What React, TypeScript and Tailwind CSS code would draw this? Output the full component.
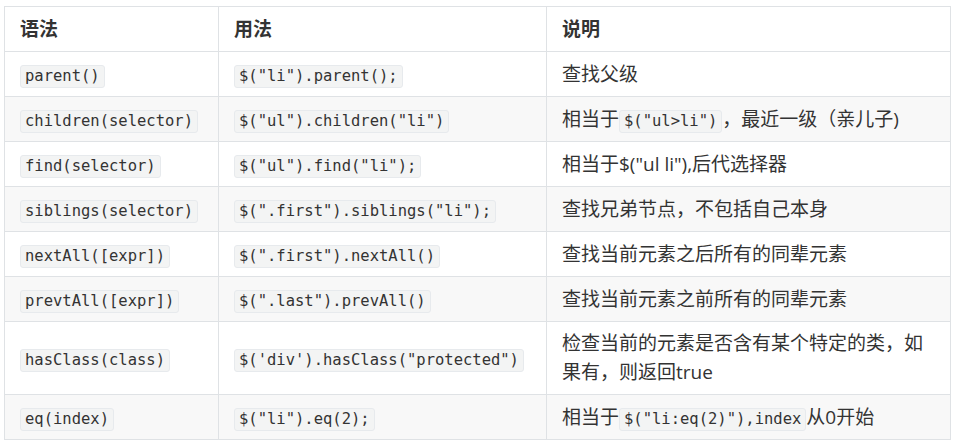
import React from "react";

const C = ({ children }: { children: React.ReactNode }) => (
  <code className="inline-block rounded-[3px] border border-[#e7eaed] bg-[#f3f4f4] px-[4px] py-[1px] align-baseline font-['DejaVu_Sans_Mono','Liberation_Mono',monospace] text-[15.5px] leading-[19px] text-[#333]">
    {children}
  </code>
);

const rows: [string, string, React.ReactNode][] = [
  ["parent()", '$("li").parent();', "查找父级"],
  [
    "children(selector)",
    '$("ul").children("li")',
    <>
      相当于<C>{'$("ul>li")'}</C>，最近一级（亲儿子)
    </>,
  ],
  ["find(selector)", '$("ul").find("li");', '相当于$("ul li"),后代选择器'],
  ["siblings(selector)", '$(".first").siblings("li");', "查找兄弟节点，不包括自己本身"],
  ["nextAll([expr])", '$(".first").nextAll()', "查找当前元素之后所有的同辈元素"],
  ["prevtAll([expr])", '$(".last").prevAll()', "查找当前元素之前所有的同辈元素"],
  [
    "hasClass(class)",
    "$('div').hasClass(\"protected\")",
    "检查当前的元素是否含有某个特定的类，如果有，则返回true",
  ],
  [
    "eq(index)",
    '$("li").eq(2);',
    <>
      相当于<C>{'$("li:eq(2)"),index'}</C>从0开始
    </>,
  ],
];

export default function App() {
  return (
    <div className="h-[448px] w-[955px] bg-white pl-[4px] pt-[6px] font-['Open_Sans','Noto_Sans_CJK_SC',sans-serif] text-[19px] text-[#333]">
      <table className="w-[946px] table-fixed border-collapse">
        <colgroup>
          <col className="w-[214px]" />
          <col className="w-[328px]" />
          <col className="w-[404px]" />
        </colgroup>
        <thead>
          <tr className="bg-white">
            {["语法", "用法", "说明"].map((h) => (
              <th
                key={h}
                className="border border-[#dfe2e5] px-[15px] py-[7px] text-left font-bold leading-[30px]"
              >
                {h}
              </th>
            ))}
          </tr>
        </thead>
        <tbody>
          {rows.map(([a, b, c], i) => (
            <tr key={a} className={i % 2 === 1 ? "bg-[#f8f8f8]" : "bg-white"}>
              <td className="border border-[#dfe2e5] px-[15px] py-[7px] leading-[30px]">
                <C>{a}</C>
              </td>
              <td className="border border-[#dfe2e5] px-[15px] py-[7px] leading-[30px]">
                <C>{b}</C>
              </td>
              <td className="border border-[#dfe2e5] px-[15px] py-[7px] leading-[29px]">
                {c}
              </td>
            </tr>
          ))}
        </tbody>
      </table>
    </div>
  );
}
